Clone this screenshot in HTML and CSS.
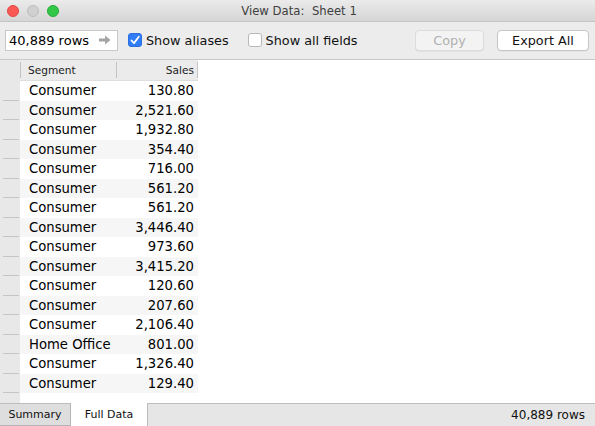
FILE: index.html
```html
<!DOCTYPE html>
<html>
<head>
<meta charset="utf-8">
<link rel="stylesheet" href="styles.css">
</head>
<body>
<div class="window">
  <div class="titlebar">
    <div class="lights">
      <span class="light red"></span>
      <span class="light grey"></span>
      <span class="light green"></span>
    </div>
    <div class="title">View Data:&nbsp; Sheet 1</div>
  </div>
  <div class="toolbar">
    <div class="rowbox"><span>40,889 rows</span>
      <svg class="arrow" width="12" height="10" viewBox="0 0 12 10"><path d="M0 3.5h6V0.5L11.5 5 6 9.5V6.5H0z" fill="#a4a4a4"/></svg>
    </div>
    <label class="check"><span class="box on"><svg width="12" height="12" viewBox="0 0 12 12"><path d="M2.5 6.5l2.5 2.6L9.8 2.8" fill="none" stroke="#fff" stroke-width="1.8" stroke-linecap="round" stroke-linejoin="round"/></svg></span>Show aliases</label>
    <label class="check second"><span class="box"></span>Show all fields</label>
    <div class="spacer"></div>
    <button class="btn disabled">Copy</button>
    <button class="btn">Export All</button>
  </div>
  <div class="gridarea">
    <div class="grid">
      <div class="rh hdr"></div><div class="hc seg">Segment</div><div class="hc sales">Sales</div>
      <div class="rh"></div><div class="c">Consumer</div><div class="c n">130.80</div>
      <div class="rh"></div><div class="c alt">Consumer</div><div class="c n alt">2,521.60</div>
      <div class="rh"></div><div class="c">Consumer</div><div class="c n">1,932.80</div>
      <div class="rh"></div><div class="c alt">Consumer</div><div class="c n alt">354.40</div>
      <div class="rh"></div><div class="c">Consumer</div><div class="c n">716.00</div>
      <div class="rh"></div><div class="c alt">Consumer</div><div class="c n alt">561.20</div>
      <div class="rh"></div><div class="c">Consumer</div><div class="c n">561.20</div>
      <div class="rh"></div><div class="c alt">Consumer</div><div class="c n alt">3,446.40</div>
      <div class="rh"></div><div class="c">Consumer</div><div class="c n">973.60</div>
      <div class="rh"></div><div class="c alt">Consumer</div><div class="c n alt">3,415.20</div>
      <div class="rh"></div><div class="c">Consumer</div><div class="c n">120.60</div>
      <div class="rh"></div><div class="c alt">Consumer</div><div class="c n alt">207.60</div>
      <div class="rh"></div><div class="c">Consumer</div><div class="c n">2,106.40</div>
      <div class="rh"></div><div class="c alt">Home Office</div><div class="c n alt">801.00</div>
      <div class="rh"></div><div class="c">Consumer</div><div class="c n">1,326.40</div>
      <div class="rh"></div><div class="c alt">Consumer</div><div class="c n alt">129.40</div>
      <div class="rh"></div><div class="c"></div><div class="c n"></div>
      <div class="rh"></div><div class="c alt"></div><div class="c n alt"></div>
    </div>
  </div>
  <div class="tabbar">
    <div class="tab">Summary</div>
    <div class="tab active">Full Data</div>
    <div class="status">40,889 rows</div>
  </div>
</div>
</body>
</html>
```
FILE: styles.css
```css
* { box-sizing: border-box; }
html, body { margin: 0; padding: 0; }
body { font-family: "DejaVu Sans", sans-serif; background: #ececec; }
.window { width: 595px; height: 426px; display: flex; flex-direction: column; overflow: hidden; background: #ececec; }

.titlebar { height: 22px; position: relative; display: flex; align-items: center; justify-content: center;
  background: linear-gradient(#ebebeb, #d5d5d5); border-bottom: 1px solid #c4c4c4; flex: none; }
.lights { position: absolute; left: 7px; top: 5px; display: flex; gap: 8px; }
.light { width: 12px; height: 12px; border-radius: 50%; display: block; }
.light.red { background: #fc5753; border: 0.5px solid #df4744; }
.light.grey { background: #d0d0d0; border: 0.5px solid #bcbcbc; }
.light.green { background: #33c748; border: 0.5px solid #27aa35; }
.title { font-size: 11.7px; color: #404040; padding-left: 3px; }

.toolbar { height: 38px; display: flex; align-items: center; padding: 0 6px 1px 5px; border-bottom: 1px solid #c9c9c9; flex: none; }
.rowbox { width: 113px; height: 21px; background: #fff; border: 1px solid #c8c8c8; display: flex; align-items: center;
  justify-content: space-between; padding: 0 6px 0 3px; font-size: 13px; color: #000; }
.arrow { display: block; }
.check { display: flex; align-items: center; font-size: 12.8px; color: #111; margin-left: 10px; }
.check.second { margin-left: 19px; }
.box { width: 14px; height: 14px; border-radius: 3px; border: 1px solid #b8b8b8; background: #fff; margin-right: 4px;
  display: flex; align-items: center; justify-content: center; }
.box.on { background: #2f7cf6; border-color: #2a6fe0; }
.spacer { flex: 1; }
.btn { font-family: "DejaVu Sans", sans-serif; font-size: 12.8px; height: 21px; background: #fff; border: 1px solid #c6c6c6;
  border-radius: 4px; padding: 0; color: #111; box-shadow: 0 0.5px 0.5px rgba(0,0,0,0.08); }
.btn.disabled { width: 69px; background: #f3f3f3; color: #b0b0b0; border-color: #dcdcdc; margin-right: 13px; }
.btn:not(.disabled) { width: 92px; }

.gridarea { flex: 1; background: #fff; overflow: hidden; }
.grid { display: grid; grid-template-columns: 20px 96px 82px; grid-auto-rows: 19.5px; grid-template-rows: 21px; width: 198px; }
.rh { background: #e8e8e8; position: relative; }
.rh::after { content: ""; position: absolute; left: 3px; right: 1px; bottom: 0; height: 1px; background: #c5c5c5; }
.rh.hdr::after { display: none; }
.hc { background: #ebebeb; font-size: 10.6px; color: #222; display: flex; align-items: center; position: relative;
  border-bottom: 1px solid #dedede; }
.hc::before { content: ""; position: absolute; left: 0; top: 2px; bottom: 2px; width: 1px; background: #c4c4c4; }
.hc.seg { padding-left: 8px; }
.hc.sales { justify-content: flex-end; padding-right: 4px; }
.hc.sales::after { content: ""; position: absolute; right: 0; top: 2px; bottom: 2px; width: 1px; background: #c4c4c4; }
.c { font-size: 13.2px; color: #000; display: flex; align-items: center; padding-left: 9px; background: #fff; white-space: nowrap; }
.c.alt { background: #f6f6f6; }
.c.n { justify-content: flex-end; padding-left: 0; padding-right: 4px; }

.tabbar { height: 23px; flex: none; display: flex; align-items: stretch; border-top: 1px solid #bdbdbd; background: #e6e6e6; }
.tab { font-size: 11px; color: #111; display: flex; align-items: center; justify-content: center; }
.tab:first-child { width: 71px; background: #dedede; border: 1px solid #b5b5b5; border-top: none; border-left: none; }
.tab.active { width: 77px; background: #fff; margin-top: -1px; border-right: 1px solid #bdbdbd; }
.status { flex: 1; font-size: 12px; display: flex; align-items: center; justify-content: flex-end; padding-right: 10px; color: #111; }
```
